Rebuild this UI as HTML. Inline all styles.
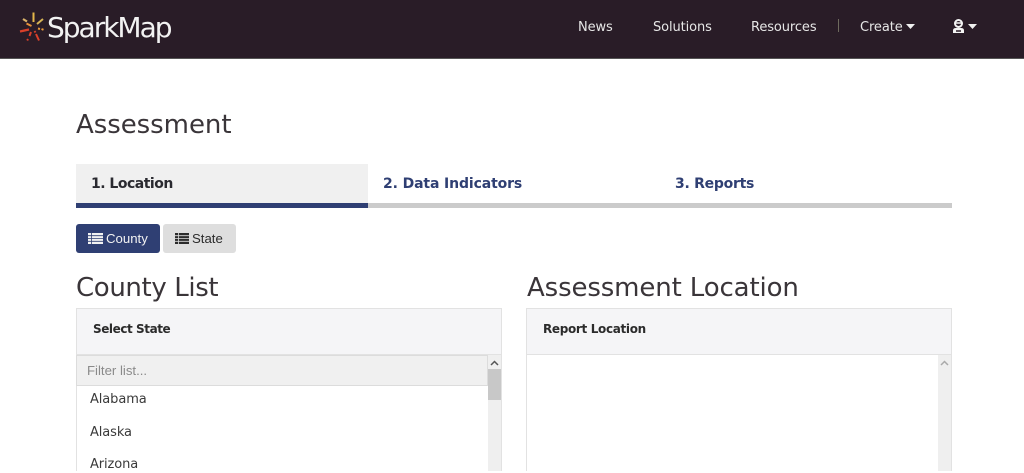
<!DOCTYPE html>
<html lang="en">
<head>
<meta charset="utf-8">
<title>Assessment - SparkMap</title>
<style>
html,body{margin:0;padding:0;background:#fff;}
body{width:1024px;height:471px;overflow:hidden;position:relative;font-family:"Liberation Sans",sans-serif;color:#2a2a2a;}
.a{position:absolute;white-space:nowrap;}
#nav{position:absolute;left:0;top:0;width:1024px;height:58px;background:#291c27;border-bottom:1px solid #555;box-sizing:content-box;}
.n{color:#e6e6e6;font-family:"DejaVu Sans",sans-serif;font-size:13px;letter-spacing:-.1px;top:20px;line-height:16px;}
.h{font-family:"DejaVu Sans",sans-serif;font-weight:400;color:#3a3539;font-size:26px;line-height:32px;}
.t{font-family:"DejaVu Sans",sans-serif;font-weight:700;font-size:14px;line-height:20px;top:174px;color:#2f3f73;}
.p{font-family:"DejaVu Sans",sans-serif;font-weight:700;font-size:12px;line-height:16px;top:321px;color:#2b2b2b;}
.box{position:absolute;background:#f5f5f7;border:1px solid #e2e2e2;box-sizing:border-box;}
.i{font-family:"DejaVu Sans",sans-serif;font-size:13px;line-height:16px;letter-spacing:-.1px;color:#3a3a3a;left:90px;}
.btn{position:absolute;top:224px;height:29px;border-radius:3px;box-sizing:border-box;font-size:13.2px;line-height:30px;}
</style>
</head>
<body>
<div id="nav"></div>
<svg class="a" style="left:18px;top:11px" width="30" height="32" viewBox="0 0 30 32">
<g fill="none" stroke-linecap="butt">
<path d="M15.500 1.500V11" stroke="#e3b64a" stroke-width="2"/>
<path d="M5 8l4 2.500" stroke="#d9b36a" stroke-width="2.200"/>
<path d="M25 8l-6 5" stroke="#d6b455" stroke-width="2"/>
<path d="M8.500 12.500l5 2.500" stroke="#e8913a" stroke-width="2"/>
<path d="M20 17.500l2 .5M23.500 18l2 .8" stroke="#e89a3a" stroke-width="2"/>
<path d="M2 20.500l9-2" stroke="#d9402a" stroke-width="2.200"/>
<path d="M13 21l-1.500 4M10 28l-.8 1.500" stroke="#d9402a" stroke-width="2"/>
<path d="M16.500 20l1 1.500M18 23l3 6.500" stroke="#d9402a" stroke-width="2"/>
</g>
</svg>
<div class="a" style="left:47px;top:10px;font-family:'DejaVu Sans',sans-serif;font-size:28px;line-height:36px;letter-spacing:-2px;color:#f2f2f2;font-weight:400;">SparkMap</div>

<div class="a n" style="left:578px">News</div>
<div class="a n" style="left:653px">Solutions</div>
<div class="a n" style="left:751px">Resources</div>
<div class="a" style="left:838px;top:19px;width:1px;height:13px;background:#6e6a5e"></div>
<div class="a n" style="left:860px">Create</div>
<svg class="a" style="left:906px;top:24px" width="9" height="5"><path d="M0 0h9L4.500 5z" fill="#f0f0f0"/></svg>
<svg class="a" style="left:952px;top:19px" width="13" height="15" viewBox="0 0 13 15">
<circle cx="6.500" cy="4.500" r="3.500" fill="none" stroke="#f4f4f4" stroke-width="2"/>
<path d="M4 4h5" stroke="#f4f4f4" stroke-width="1.500"/>
<path d="M1 14v-2.500Q1 9 4 9h5q3 0 3 2.500V14z" fill="#f4f4f4"/>
<path d="M4 12h5" stroke="#291c27" stroke-width="1.500"/>
</svg>
<svg class="a" style="left:968px;top:24px" width="9" height="5"><path d="M0 0h9L4.500 5z" fill="#f0f0f0"/></svg>

<div class="a h" style="left:76px;top:109px;letter-spacing:-.05px">Assessment</div>

<div class="a" style="left:76px;top:164px;width:292px;height:39px;background:#f0f0f0"></div>
<div class="a" style="left:76px;top:203px;width:292px;height:5px;background:#2f3f73"></div>
<div class="a" style="left:368px;top:203px;width:584px;height:5px;background:#cbcbcb"></div>
<div class="a t" style="left:91px;color:#2a2a30;letter-spacing:-.5px">1. Location</div>
<div class="a t" style="left:383px;letter-spacing:-.12px">2. Data Indicators</div>
<div class="a t" style="left:675px;letter-spacing:-.27px">3. Reports</div>

<div class="btn" style="left:76px;width:84px;background:#2f3f73;color:#f2f2f2">
<svg class="a" style="left:12px;top:9px" width="15" height="11" viewBox="0 0 15 11"><path d="M0 0h15v11H0z" fill="#f2f2f2"/><path d="M0 2.700h15M0 5.500h15M0 8.300h15M3.500 0v11" stroke="#2f3f73" stroke-width=".8"/></svg>
<span class="a" style="left:30px;top:0">County</span></div>
<div class="btn" style="left:163px;width:73px;background:#dedede;color:#2b2b2b">
<svg class="a" style="left:12px;top:9px" width="14" height="11" viewBox="0 0 14 11"><path d="M0 0h14v11H0z" fill="#2b2b2b"/><path d="M0 2.700h14M0 5.500h14M0 8.300h14M3.500 0v11" stroke="#dedede" stroke-width=".8"/></svg>
<span class="a" style="left:29px;top:0">State</span></div>

<div class="a h" style="left:76px;top:272px;letter-spacing:-.37px">County List</div>
<div class="a h" style="left:527px;top:272px;letter-spacing:-.13px">Assessment Location</div>

<div class="box" style="left:76px;top:308px;width:426px;height:47px;"></div>
<div class="a p" style="left:93px;letter-spacing:-.43px">Select State</div>
<div class="box" style="left:526px;top:308px;width:426px;height:47px;"></div>
<div class="a p" style="left:543px;letter-spacing:-.33px">Report Location</div>

<div class="a" style="left:76px;top:355px;width:1px;height:116px;background:#e2e2e2"></div>
<div class="a" style="left:501px;top:355px;width:1px;height:116px;background:#e2e2e2"></div>
<div class="a" style="left:526px;top:355px;width:1px;height:116px;background:#e2e2e2"></div>
<div class="a" style="left:951px;top:355px;width:1px;height:116px;background:#e2e2e2"></div>

<div class="a" style="left:76px;top:355px;width:412px;height:31px;background:#f0f0f0;border:1px solid #dcdcdc;box-sizing:border-box;font-size:13.2px;line-height:30px;color:#8a8a8a;padding-left:10px">Filter list...</div>
<div class="a i" style="top:392px">Alabama</div>
<div class="a i" style="top:425px">Alaska</div>
<div class="a i" style="top:457px">Arizona</div>

<div class="a" style="left:488px;top:355px;width:13px;height:116px;background:#efefef"></div>
<div class="a" style="left:488px;top:369px;width:13px;height:31px;background:#c8c8c8"></div>
<svg class="a" style="left:490px;top:360px" width="9" height="6"><path d="M1 5l3.500-3.500L8 5" fill="none" stroke="#555" stroke-width="1.500"/></svg>

<div class="a" style="left:938px;top:355px;width:13px;height:116px;background:#efefef"></div>
<svg class="a" style="left:940px;top:360px" width="9" height="6"><path d="M1 5l3.500-3.500L8 5" fill="none" stroke="#aaa" stroke-width="1.500"/></svg>
</body>
</html>
